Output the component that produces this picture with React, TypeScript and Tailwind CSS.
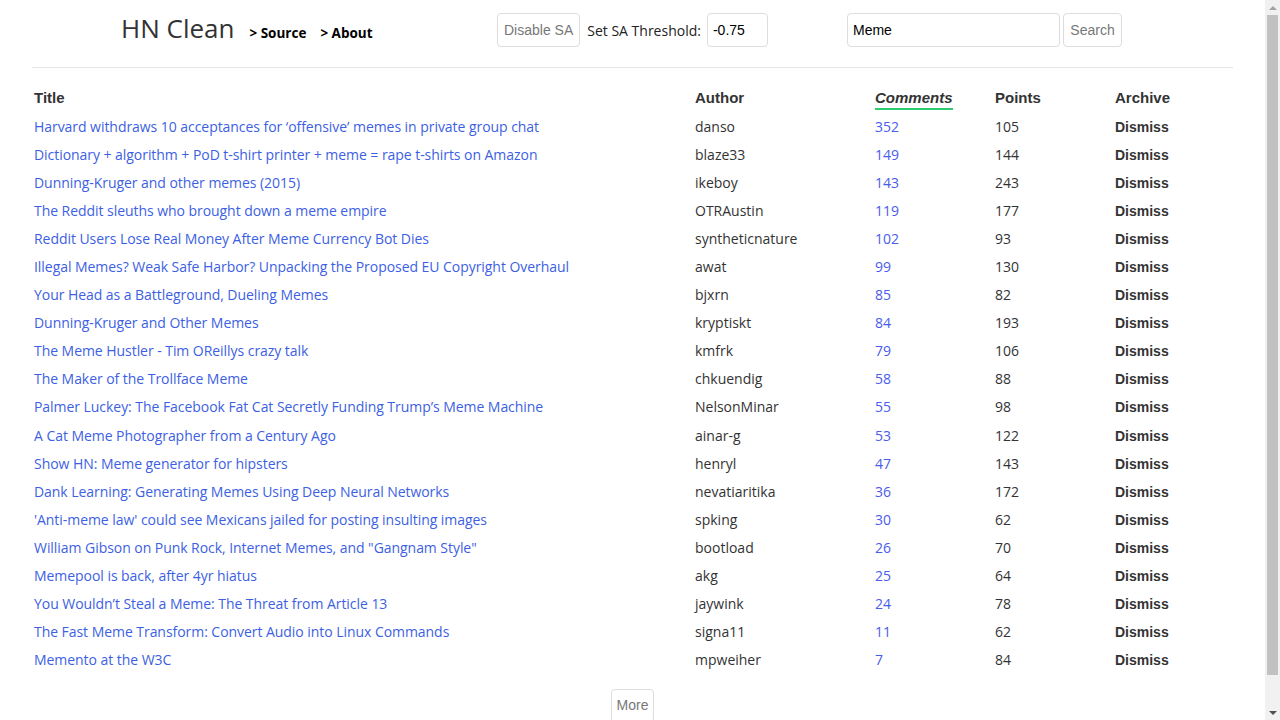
import React from "react";

const rows: [string, string, number, number][] = [
  ["Harvard withdraws 10 acceptances for \u2018offensive\u2019 memes in private group chat", "danso", 352, 105],
  ["Dictionary + algorithm + PoD t-shirt printer + meme = rape t-shirts on Amazon", "blaze33", 149, 144],
  ["Dunning-Kruger and other memes (2015)", "ikeboy", 143, 243],
  ["The Reddit sleuths who brought down a meme empire", "OTRAustin", 119, 177],
  ["Reddit Users Lose Real Money After Meme Currency Bot Dies", "syntheticnature", 102, 93],
  ["Illegal Memes? Weak Safe Harbor? Unpacking the Proposed EU Copyright Overhaul", "awat", 99, 130],
  ["Your Head as a Battleground, Dueling Memes", "bjxrn", 85, 82],
  ["Dunning-Kruger and Other Memes", "kryptiskt", 84, 193],
  ["The Meme Hustler - Tim OReillys crazy talk", "kmfrk", 79, 106],
  ["The Maker of the Trollface Meme", "chkuendig", 58, 88],
  ["Palmer Luckey: The Facebook Fat Cat Secretly Funding Trump\u2019s Meme Machine", "NelsonMinar", 55, 98],
  ["A Cat Meme Photographer from a Century Ago", "ainar-g", 53, 122],
  ["Show HN: Meme generator for hipsters", "henryl", 47, 143],
  ["Dank Learning: Generating Memes Using Deep Neural Networks", "nevatiaritika", 36, 172],
  ["'Anti-meme law' could see Mexicans jailed for posting insulting images", "spking", 30, 62],
  ["William Gibson on Punk Rock, Internet Memes, and \"Gangnam Style\"", "bootload", 26, 70],
  ["Memepool is back, after 4yr hiatus", "akg", 25, 64],
  ["You Wouldn\u2019t Steal a Meme: The Threat from Article 13", "jaywink", 24, 78],
  ["The Fast Meme Transform: Convert Audio into Linux Commands", "signa11", 11, 62],
  ["Memento at the W3C", "mpweiher", 7, 84],
];

const body = { fontFamily: '"Open Sans", "Noto Sans", sans-serif' };
const arial = { fontFamily: '"Liberation Sans", Arial, sans-serif' };

export default function App() {
  return (
    <div className="flex h-[720px] w-[1280px] bg-white text-[#333]" style={body}>
      <div className="w-[1265px]">
        <div className="mx-[32px]">
          <div className="flex h-[68px] items-start border-b border-[#e5e5e5] pt-[13px]">
            <div className="flex w-[465px] items-baseline pl-[89px]">
              <span className="text-[26px] leading-[30px] text-[#333]">HN Clean</span>
              <span className="ml-[15px] text-[13.5px] font-bold text-black">&gt; Source</span>
              <span className="ml-[14px] text-[13.5px] font-bold text-black">&gt; About</span>
            </div>
            <div className="flex w-[350px] items-center">
              <button
                className="h-[34px] rounded-[4px] border border-[#ddd] bg-white px-[6px] text-[14px] text-[#777]"
                style={arial}
              >
                Disable SA
              </button>
              <span className="ml-[7px] text-[14px] text-[#222]">Set SA Threshold:</span>
              <input
                defaultValue="-0.75"
                className="ml-[6px] h-[34px] w-[61px] rounded-[4px] border border-[#ddd] px-[5px] text-[14px] text-black outline-none"
                style={arial}
              />
            </div>
            <div className="flex items-center">
              <input
                defaultValue="Meme"
                className="h-[34px] w-[213px] rounded-[4px] border border-[#ddd] px-[5px] text-[14px] text-black outline-none"
                style={arial}
              />
              <button
                className="ml-[3px] h-[34px] w-[59px] rounded-[4px] border border-[#ddd] bg-white text-[14px] text-[#777]"
                style={arial}
              >
                Search
              </button>
            </div>
          </div>

          <div className="mt-[16px] flex h-[28px] items-center text-[15px] font-bold text-[#333]" style={arial}>
            <div className="w-[663px] pl-[2px]">Title</div>
            <div className="w-[180px]">Author</div>
            <div className="w-[120px]">
              <span className="border-b-2 border-[#2ecc71] pb-[2px] italic">Comments</span>
            </div>
            <div className="w-[120px]">Points</div>
            <div>Archive</div>
          </div>

          {rows.map(([title, author, comments, points]) => (
            <div key={title} className="flex h-[28.1px] items-center text-[14px]">
              <div className="w-[663px] pl-[2px] tracking-[-0.05px] text-[#3d5fe3]">{title}</div>
              <div className="w-[180px] text-[#333]">{author}</div>
              <div className="w-[120px] text-[#4a5cec]">{comments}</div>
              <div className="w-[120px] text-[#333]">{points}</div>
              <div className="pt-[2px] text-[14px] font-bold text-[#333]" style={arial}>
                Dismiss
              </div>
            </div>
          ))}

          <div className="mt-[15px] flex justify-center">
            <button
              className="h-[34px] rounded-[4px] border border-[#ddd] bg-white px-[5px] text-[14px] text-[#777]"
              style={arial}
            >
              More
            </button>
          </div>
        </div>
      </div>
      <div className="relative w-[15px] bg-[#f1f1f1]">
        <div className="flex h-[15px] items-center justify-center">
          <div className="h-0 w-0 border-x-[4px] border-b-[4px] border-x-transparent border-b-[#a3a3a3]" />
        </div>
        <div className="mx-[2px] h-[660px] bg-[#c1c1c1]" />
        <div className="absolute bottom-0 left-0 flex h-[15px] w-[15px] items-center justify-center">
          <div className="h-0 w-0 border-x-[4px] border-t-[4px] border-x-transparent border-t-[#505050]" />
        </div>
      </div>
    </div>
  );
}
